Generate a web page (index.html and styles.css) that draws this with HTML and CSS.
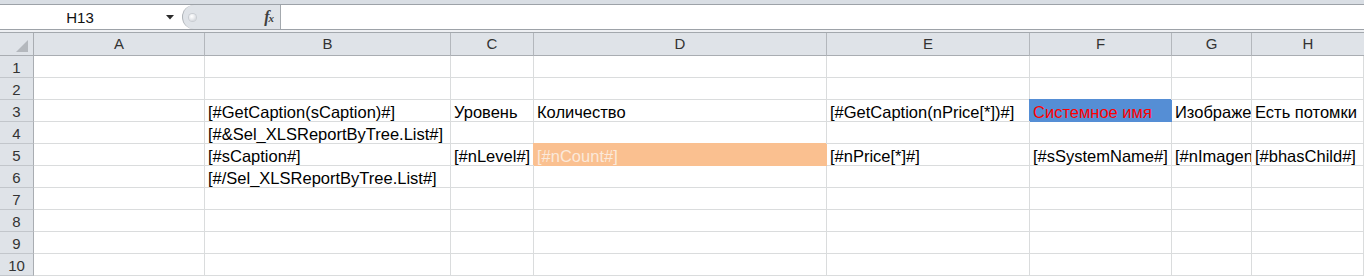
FILE: index.html
```html
<!DOCTYPE html>
<html lang="ru">
<head>
<meta charset="utf-8">
<title>Sheet</title>
<link rel="stylesheet" href="styles.css">
</head>
<body>
<div class="topbar">
  <div class="fbar">
    <div class="namebox">
      <span class="nb-text">H13</span>
      <svg class="nb-arrow" width="8" height="5" viewBox="0 0 8 5"><path d="M0 0 H8 L4 4.5 Z" fill="#2b2b2b"/></svg>
    </div>
    <div class="fx-area">
      <span class="grip"></span>
      <span class="fx"><i>f</i><span class="fx-x">x</span></span>
    </div>
    <div class="formula-input"></div>
  </div>
  <div class="fsep"></div>
</div>
<div class="sheet">
  <div class="ch corner"><svg width="14" height="14" viewBox="0 0 14 14"><path d="M13 1 V13 H1 Z" fill="#b4b8bd"/></svg></div>
  <div class="ch">A</div><div class="ch">B</div><div class="ch">C</div><div class="ch">D</div><div class="ch">E</div><div class="ch">F</div><div class="ch">G</div><div class="ch last">H</div>

  <div class="rh">1</div><div class="c"></div><div class="c"></div><div class="c"></div><div class="c"></div><div class="c"></div><div class="c"></div><div class="c"></div><div class="c"></div>
  <div class="rh">2</div><div class="c"></div><div class="c"></div><div class="c"></div><div class="c"></div><div class="c"></div><div class="c"></div><div class="c"></div><div class="c"></div>
  <div class="rh">3</div><div class="c"></div><div class="c">[#GetCaption(sCaption)#]</div><div class="c">Уровень</div><div class="c">Количество</div><div class="c">[#GetCaption(nPrice[*])#]</div><div class="c fill-blue">Системное имя</div><div class="c">Изображение</div><div class="c">Есть потомки</div>
  <div class="rh">4</div><div class="c"></div><div class="c">[#&amp;Sel_XLSReportByTree.List#]</div><div class="c"></div><div class="c"></div><div class="c"></div><div class="c"></div><div class="c"></div><div class="c"></div>
  <div class="rh">5</div><div class="c"></div><div class="c">[#sCaption#]</div><div class="c">[#nLevel#]</div><div class="c fill-orange">[#nCount#]</div><div class="c">[#nPrice[*]#]</div><div class="c">[#sSystemName#]</div><div class="c">[#nImagename#]</div><div class="c">[#bhasChild#]</div>
  <div class="rh">6</div><div class="c"></div><div class="c">[#/Sel_XLSReportByTree.List#]</div><div class="c"></div><div class="c"></div><div class="c"></div><div class="c"></div><div class="c"></div><div class="c"></div>
  <div class="rh">7</div><div class="c"></div><div class="c"></div><div class="c"></div><div class="c"></div><div class="c"></div><div class="c"></div><div class="c"></div><div class="c"></div>
  <div class="rh">8</div><div class="c"></div><div class="c"></div><div class="c"></div><div class="c"></div><div class="c"></div><div class="c"></div><div class="c"></div><div class="c"></div>
  <div class="rh">9</div><div class="c"></div><div class="c"></div><div class="c"></div><div class="c"></div><div class="c"></div><div class="c"></div><div class="c"></div><div class="c"></div>
  <div class="rh">10</div><div class="c"></div><div class="c"></div><div class="c"></div><div class="c"></div><div class="c"></div><div class="c"></div><div class="c"></div><div class="c"></div>
</div>
</body>
</html>
```
FILE: styles.css
```css
html, body {
  margin: 0;
  padding: 0;
}
body {
  width: 1364px;
  height: 279px;
  overflow: hidden;
  background: #ffffff;
  font-family: "Liberation Sans", Arial, sans-serif;
  color: #000;
}
.topbar {
  background: #d9dee4;
  padding-top: 4px;
}
.fbar {
  display: flex;
  height: 26px;
  box-sizing: border-box;
  border-top: 1px solid #9da2a8;
  border-bottom: 1px solid #9da2a8;
  background: #fff;
}
.namebox {
  width: 182px;
  display: flex;
  align-items: center;
  background: #fff;
}
.nb-text {
  width: 160px;
  text-align: center;
  font-size: 15px;
  color: #111;
  padding-top: 1px;
}
.nb-arrow {
  margin-left: 6px;
  margin-top: 1px;
}
.fx-area {
  width: 99px;
  display: flex;
  align-items: center;
  background: #dfe3e8;
  border-left: 1px solid #aeb3b8;
  border-right: 1px solid #a4a9ae;
  border-radius: 12px 0 0 12px;
  box-sizing: border-box;
}
.grip {
  width: 7px;
  height: 7px;
  margin-left: 6px;
  border-radius: 50%;
  background: radial-gradient(circle at 40% 35%, #ffffff 0, #e9ebee 45%, #c4c8cd 100%);
  box-shadow: 0 0 0 1px #c9cdd2;
}
.fx {
  margin-left: auto;
  margin-right: 6px;
  font-family: "Liberation Serif", "Times New Roman", serif;
  font-weight: bold;
  color: #404040;
  font-size: 16px;
  line-height: 1;
}
.fx i {
  font-style: italic;
}
.fx-x {
  font-style: italic;
  font-size: 11px;
  margin-left: -1px;
}
.formula-input {
  flex: 1;
  background: #fff;
}
.fsep {
  height: 2px;
  background: #eef0f3;
  border-bottom: 1px solid #a3a8ad;
}
.sheet {
  display: grid;
  grid-template-columns: 34px 171px 246px 83px 293px 203px 142px 80px 1fr;
  grid-template-rows: 23px repeat(10, 22px);
}
.ch {
  box-sizing: border-box;
  background: #dfe3e8;
  border-right: 1px solid #b3b7bc;
  border-bottom: 1px solid #a9adb2;
  text-align: center;
  font-size: 15px;
  line-height: 22px;
  color: #333;
}
.ch.last {
  border-right: none;
}
.corner {
  display: flex;
  justify-content: flex-end;
  align-items: flex-end;
  padding: 0 4px 2px 0;
  border-right-color: #a9adb2;
}
.rh {
  box-sizing: border-box;
  background: #dfe3e8;
  border-right: 1px solid #a9adb2;
  border-bottom: 1px solid #c2c6cb;
  text-align: center;
  font-size: 15px;
  line-height: 23px;
  color: #333;
}
.c {
  box-sizing: border-box;
  border-right: 1px solid #dadcdd;
  border-bottom: 1px solid #dadcdd;
  font-size: 16.5px;
  line-height: 24px;
  padding-left: 3px;
  white-space: nowrap;
  overflow: hidden;
  color: #000;
}
.fill-blue {
  background: #558ed5;
  border-color: #558ed5;
  box-shadow: -1px -1px 0 0 #558ed5;
  color: #ff0000;
}
.fill-orange {
  background: #fac090;
  border-color: #fac090;
  box-shadow: -1px -1px 0 0 #fac090;
  color: #fbe9da;
}
```
